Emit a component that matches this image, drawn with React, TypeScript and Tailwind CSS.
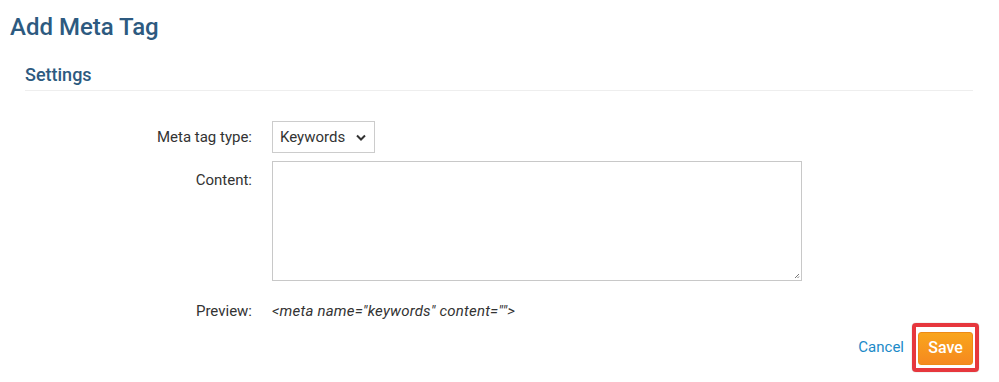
import React from "react";

export default function App() {
  return (
    <div className="w-[999px] h-[382px] bg-white overflow-hidden" style={{ fontFamily: "Roboto, 'Liberation Sans', sans-serif" }}>
      <div className="pl-[10px] pt-[12px]">
        <h1 className="text-[24px] leading-[30px] font-medium text-[#2d5a80]">Add Meta Tag</h1>
      </div>
      <div className="ml-[25px] mr-[26px] mt-[22px]">
        <h2 className="text-[18px] leading-[22px] font-medium text-[#2d5a80] pb-[4px] border-b border-[#eeeeee]">Settings</h2>
        <div className="mt-[30px] flex flex-col">
          <div className="flex items-center h-[32px]">
            <label className="w-[227px] text-right text-[15px] text-[#333333]">Meta tag type:</label>
            <div className="ml-[20px] w-[103px] h-[32px] border border-[#cccccc] flex items-center justify-between pl-[7px] pr-[8px] text-[15px] text-[#333333]">
              <span>Keywords</span>
              <svg width="10" height="7" viewBox="0 0 10 7"><path d="M1 1.5 L5 5.5 L9 1.5" fill="none" stroke="#333" strokeWidth="2" /></svg>
            </div>
          </div>
          <div className="flex mt-[8px]">
            <label className="w-[227px] text-right text-[15px] text-[#333333] pt-[8px]">Content:</label>
            <div className="ml-[20px] relative w-[530px] h-[120px] border border-[#c8c8c8]">
              <svg className="absolute right-[1px] bottom-[1px]" width="6" height="6" viewBox="0 0 6 6">
                <path d="M5 1 L1 5 M5 3.5 L3.5 5" stroke="#777" strokeWidth="1" />
              </svg>
            </div>
          </div>
          <div className="flex items-center mt-[19px]">
            <label className="w-[227px] text-right text-[15px] text-[#333333]">Preview:</label>
            <div className="ml-[20px] text-[15px] italic tracking-[0.2px] text-[#333333]">&lt;meta name="keywords" content=""&gt;</div>
          </div>
        </div>
        <div className="flex justify-end items-center mt-0">
          <a className="text-[15px] text-[#1b8ac8] mr-[8px]">Cancel</a>
          <div className="border-[4px] border-[#e6373d] rounded-[4px] pt-[5px] pb-[3px] px-[2px] mr-[-6px] shadow-[0_0_1px_#888]">
            <button className="h-[33px] w-[55px] rounded-[3px] text-white text-[16px] font-medium bg-gradient-to-b from-[#f9a51c] to-[#f5891f] border border-[#ee8a15]">Save</button>
          </div>
        </div>
      </div>
    </div>
  );
}
